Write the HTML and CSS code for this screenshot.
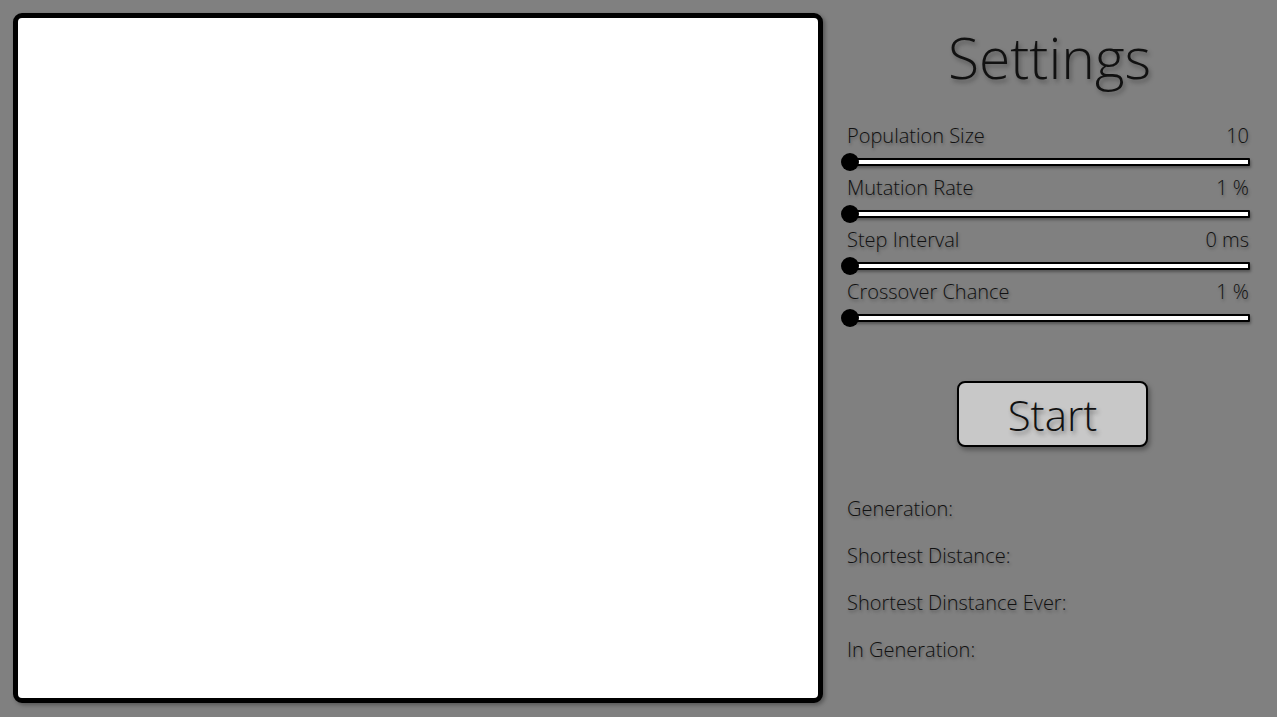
FILE: index.html
```html
<!DOCTYPE html>
<html>
<head>
<meta charset="utf-8">
<link rel="stylesheet" href="styles.css">
</head>
<body>
<div class="page">
  <div class="canvas"></div>
  <div class="panel">
    <h1 class="title">Settings</h1>
    <div class="settings">
      <div class="setting">
        <div class="row"><span>Population Size</span><span>10</span></div>
        <input class="slider" type="range" min="10" max="500" value="10">
      </div>
      <div class="setting">
        <div class="row"><span>Mutation Rate</span><span>1 %</span></div>
        <input class="slider" type="range" min="1" max="100" value="1">
      </div>
      <div class="setting">
        <div class="row"><span>Step Interval</span><span>0 ms</span></div>
        <input class="slider" type="range" min="0" max="1000" value="0">
      </div>
      <div class="setting">
        <div class="row"><span>Crossover Chance</span><span>1 %</span></div>
        <input class="slider" type="range" min="1" max="100" value="1">
      </div>
    </div>
    <div class="btn-wrap"><button class="start">Start</button></div>
    <div class="stats">
      <div class="stat">Generation:</div>
      <div class="stat">Shortest Distance:</div>
      <div class="stat">Shortest Dinstance Ever:</div>
      <div class="stat">In Generation:</div>
    </div>
  </div>
</div>
</body>
</html>
```

FILE: styles.css
```css
html, body {
  margin: 0;
  padding: 0;
  background: #808080;
  height: 100%;
  overflow: hidden;
}
body {
  font-family: "Open Sans", "DejaVu Sans Condensed", sans-serif;
  font-stretch: 93%;
  font-weight: 350;
  color: #111;
}
.page {
  display: flex;
  padding: 13px;
  gap: 23px;
}
.canvas {
  width: 800px;
  height: 680px;
  background: #fff;
  border: 5px solid #000;
  border-radius: 9px;
  box-shadow: 2px 2px 4px rgba(0,0,0,0.35);
  flex: none;
}
.panel {
  width: 405px;
  display: flex;
  flex-direction: column;
}
.title {
  margin: 10px 0 0;
  text-align: center;
  font-size: 57px;
  font-weight: 350;
  line-height: 68px;
  padding-left: 2px;
  text-shadow: 2px 3px 4px rgba(40,40,40,0.45);
}
.settings {
  margin-top: 32px;
  display: flex;
  flex-direction: column;
  gap: 4px;
}
.setting {
  display: flex;
  flex-direction: column;
  gap: 4px;
}
.row {
  display: flex;
  justify-content: space-between;
  font-size: 20px;
  line-height: 26px;
  padding: 0 2px 0 1px;
  text-shadow: 1px 2px 3px rgba(40,40,40,0.45);
}
.slider {
  -webkit-appearance: none;
  appearance: none;
  margin: 0;
  width: 404px;
  height: 18px;
  background: transparent;
}
.slider::-webkit-slider-runnable-track {
  height: 8px;
  background: #fff;
  border: 2px solid #000;
  box-sizing: border-box;
  border-radius: 1px;
  box-shadow: 1px 2px 3px rgba(0,0,0,0.35);
}
.slider::-webkit-slider-thumb {
  -webkit-appearance: none;
  width: 18px;
  height: 18px;
  border-radius: 50%;
  background: #000;
  margin-top: -7px;
  margin-left: -7px;
}
.btn-wrap {
  display: flex;
  justify-content: center;
  margin-top: 54px;
  padding-left: 8px;
}
.start {
  width: 191px;
  height: 66px;
  background: #c8c8c8;
  border: 2px solid #000;
  border-radius: 8px;
  font-family: inherit;
  font-stretch: inherit;
  font-weight: 350;
  font-size: 42px;
  color: #111;
  text-shadow: 2px 3px 4px rgba(40,40,40,0.45);
  box-shadow: 2px 3px 5px rgba(0,0,0,0.35);
  padding: 0;
  cursor: pointer;
}
.stats {
  margin-top: 49px;
  display: flex;
  flex-direction: column;
  gap: 21px;
}
.stat {
  font-size: 20px;
  line-height: 26px;
  padding-left: 1px;
  text-shadow: 1px 2px 3px rgba(40,40,40,0.45);
}
```
